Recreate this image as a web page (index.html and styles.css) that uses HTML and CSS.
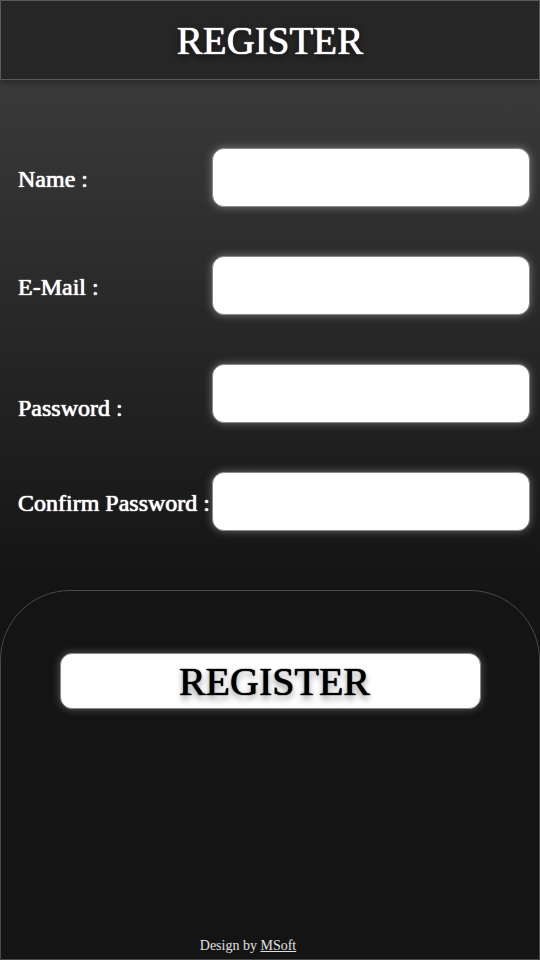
FILE: index.html
```html
<!DOCTYPE html>
<html lang="en">
<head>
<meta charset="utf-8">
<title>Register</title>
<link rel="stylesheet" href="styles.css">
</head>
<body>
<div class="page">
  <header class="header">
    <h1 class="title">REGISTER</h1>
  </header>
  <main class="form">
    <div class="row">
      <label class="label">Name :</label>
      <input class="field" type="text">
    </div>
    <div class="row">
      <label class="label">E-Mail :</label>
      <input class="field" type="text">
    </div>
    <div class="row">
      <label class="label label-low">Password :</label>
      <input class="field" type="password">
    </div>
    <div class="row">
      <label class="label">Confirm Password :</label>
      <input class="field" type="password">
    </div>
  </main>
  <section class="panel">
    <button class="btn" type="button">REGISTER</button>
    <footer class="credit">Design by <a class="credit-link" href="#">MSoft</a></footer>
  </section>
</div>
</body>
</html>
```
FILE: styles.css
```css
html, body {
  margin: 0;
  padding: 0;
  height: 100%;
  background: #141414;
}
body {
  font-family: "Liberation Serif", "Times New Roman", serif;
  color: #fff;
  overflow: hidden;
}
.page {
  width: 540px;
  height: 960px;
  display: flex;
  flex-direction: column;
  background: linear-gradient(to bottom, #3e3e3e 0px, #393939 90px, #141414 590px, #141414 960px);
}
.header {
  box-sizing: border-box;
  height: 80px;
  background: #262626;
  border: 1px solid #5a5a5a;
  display: flex;
  align-items: center;
  justify-content: center;
  box-shadow: 0 2px 6px rgba(0,0,0,0.35);
}
.title {
  margin: 0;
  font-weight: normal;
  font-size: 39px;
  line-height: 1;
  padding-top: 1px;
  color: #fff;
  text-shadow: 0 0 1px #fff, 0 0 1px #fff, 0 2px 6px rgba(0,0,0,0.8);
}
.form {
  padding: 68px 10px 0 18px;
  display: flex;
  flex-direction: column;
  gap: 49px;
}
.row {
  display: flex;
  align-items: center;
}
.label {
  flex: 0 0 194px;
  white-space: nowrap;
  font-size: 24px;
  line-height: 1.1;
  padding-top: 3px;
  color: #fff;
  text-shadow: 0 0 1px #fff, 0 0 1px #fff;
}
.label-low {
  padding-top: 29px;
}
.field {
  box-sizing: border-box;
  flex: 0 0 318px;
  height: 59px;
  margin: 0;
  border: 1px solid #8a8a8a;
  border-radius: 12px;
  background: #fff;
  box-shadow: 0 0 8px rgba(255,255,255,0.35);
  outline: none;
  font-family: inherit;
  font-size: 20px;
  padding: 0 12px;
}
.panel {
  box-sizing: border-box;
  margin-top: 59px;
  flex: 1;
  background: #141414;
  border: 1px solid #4a4a4a;
  border-radius: 70px 70px 0 0;
  display: flex;
  flex-direction: column;
  align-items: center;
  padding: 62px 0 0;
}
.btn {
  box-sizing: border-box;
  width: 421px;
  height: 56px;
  margin: 0;
  padding: 2px 0 0 9px;
  background: #fff;
  border: 1px solid #8a8a8a;
  border-radius: 12px;
  box-shadow: 0 0 8px rgba(255,255,255,0.3);
  font-family: "Liberation Serif", "Times New Roman", serif;
  font-size: 40px;
  line-height: 1;
  color: #000;
  text-shadow: 0 0 1px #000, 0 0 1px #000, 0 4px 6px rgba(0,0,0,0.45);
  cursor: pointer;
}
.credit {
  margin-top: auto;
  margin-right: 44px;
  padding-bottom: 4px;
  font-size: 14px;
  line-height: 1.2;
  color: #e0e0e0;
}
.credit-link {
  color: #e0e0e0;
  text-decoration: underline;
}
```
